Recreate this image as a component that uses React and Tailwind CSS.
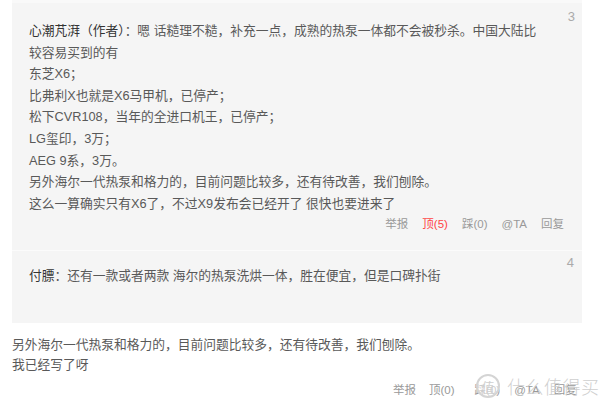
export default function App() {
  const font = { fontFamily: '"Liberation Sans", "Noto Sans CJK SC", sans-serif' };
  return (
    <div className="w-[600px] h-[407px] bg-white overflow-hidden relative text-[12.75px] leading-[21.6px] text-[#595959]" style={font}>
      <div className="ml-[12px] w-[570px] bg-[#f5f5f5] border-t-[3px] border-[#f9f9f9]">
        <div className="relative pl-[17px] pr-[18px] pt-[17px] pb-[14px]">
          <span className="absolute right-[7px] top-[3px] text-[13px] text-[#aaa]">3</span>
          <div>
            <span className="text-[#333]">心潮芃湃（作者）</span>：嗯 话糙理不糙，补充一点，成熟的热泵一体都不会被秒杀。中国大陆比
          </div>
          <div>较容易买到的有</div>
          <div>东芝X6；</div>
          <div>比弗利X也就是X6马甲机，已停产；</div>
          <div>松下CVR108，当年的全进口机王，已停产；</div>
          <div>LG玺印，3万；</div>
          <div>AEG 9系，3万。</div>
          <div>另外海尔一代热泵和格力的，目前问题比较多，还有待改善，我们刨除。</div>
          <div>这么一算确实只有X6了，不过X9发布会已经开了 很快也要进来了</div>
          <div className="flex justify-end gap-[14px] text-[11.5px] text-[#999]">
            <span>举报</span>
            <span className="text-[#f44]">顶(5)</span>
            <span>踩(0)</span>
            <span>@TA</span>
            <span>回复</span>
          </div>
        </div>
        <div className="h-px bg-[#fbfbfb]"></div>
        <div className="relative pl-[17px] pt-[14px] pb-[36px]">
          <span className="absolute right-[8px] top-[1px] text-[13px] text-[#aaa]">4</span>
          <div>
            <span className="text-[#333]">付膘</span>：还有一款或者两款 海尔的热泵洗烘一体，胜在便宜，但是口碑扑街
          </div>
        </div>
      </div>
      <div className="pl-[12px] pt-[12px] leading-[20px]">
        <div>另外海尔一代热泵和格力的，目前问题比较多，还有待改善，我们刨除。</div>
        <div>我已经写了呀</div>
      </div>
      <div className="flex pl-[393px] gap-[14px] mt-[5px] text-[11.5px] text-[#999] leading-[20px] whitespace-nowrap">
        <span>举报</span>
        <span className="ml-[-1px]">顶(0)</span>
        <span className="ml-[6px]">踩(0)</span>
        <span>@TA</span>
        <span>回复</span>
      </div>
      <div className="absolute left-[476px] top-[374px] flex items-center gap-[7px] text-[#cfcfcf]" style={{ fontFamily: '"Noto Sans CJK SC", sans-serif' }}>
        <div className="w-[24px] h-[24px] rounded-full border-[2px] border-[#d4d4d4] flex items-center justify-center text-[13px] leading-none bg-white/50">值</div>
        <span className="text-[18px] leading-none tracking-[0.5px] font-light">什么值得买</span>
      </div>
    </div>
  );
}
